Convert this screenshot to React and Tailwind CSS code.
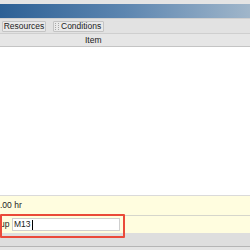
import React from 'react'

const Grip = () => (
  <div className="grid grid-cols-2 gap-[1px] w-[4px] mr-[2px]">
    {Array.from({ length: 8 }).map((_, i) => (
      <span key={i} className="w-[1px] h-[1px] bg-[#a8a8a8]" />
    ))}
  </div>
)

const App = () => {
  return (
    <div
      className="w-[250px] h-[250px] overflow-hidden bg-white flex flex-col relative text-[#222]"
      style={{ fontFamily: '"Liberation Sans", Arial, sans-serif' }}
    >
      {/* window chrome */}
      <div className="h-[4px] bg-[#e4e4e4]" />
      <div className="h-[14px] bg-gradient-to-r from-[#2c6095] via-[#5d86b0] to-[#a0b6ca]" />
      <div className="h-[1px] bg-[#d0d0d0]" />

      {/* toolbar */}
      <div className="h-[14px] bg-[#e2e2e2] flex items-center pl-[2px] gap-[7px]">
        <div className="h-[11px] w-[44px] border border-[#c4c4c4] bg-[#e9e9e9] rounded-[1px] flex items-center justify-center text-[8.5px] leading-none">
          Resources
        </div>
        <div className="h-[11px] w-[51px] border border-[#c4c4c4] bg-[#e9e9e9] rounded-[1px] flex items-center pl-[1px] text-[8.5px] leading-none">
          <Grip />
          Conditions
        </div>
      </div>

      {/* table header */}
      <div className="h-[14px] bg-[#e6e6e6] border-t border-[#cfcfcf] border-b border-b-[#c4c4c4] flex items-center pl-[85px] text-[8.5px] leading-none">
        Item
      </div>

      {/* empty table body */}
      <div className="flex-1 bg-white" />

      {/* properties */}
      <div className="h-[1px] bg-[#dadada]" />
      <div className="h-[19px] bg-[#fffddf] flex items-center text-[8.5px] leading-none">
        .00 hr
      </div>
      <div className="h-[1px] bg-[#d6d6cc]" />
      <div className="h-[17px] bg-[#fffddf] flex items-center text-[8.5px] leading-none">
        <span className="w-[12px]">up</span>
        <div className="w-[108px] h-[13px] bg-white border border-[#cfcfcf] flex items-center pl-[1px]">
          M13<span className="w-[1px] h-[10px] bg-black ml-[1px]" />
        </div>
      </div>
      <div className="h-[13px] bg-[#dedede]" />
      <div className="h-[1px] bg-[#b5b5b5]" />
      <div className="h-[3px] bg-[#e4e4e4]" />

      {/* highlight */}
      <div className="absolute left-0 top-[214px] w-[125px] h-[24px] border-2 border-[#ea4a3a] rounded-[1px]" />
    </div>
  )
}

export default App
